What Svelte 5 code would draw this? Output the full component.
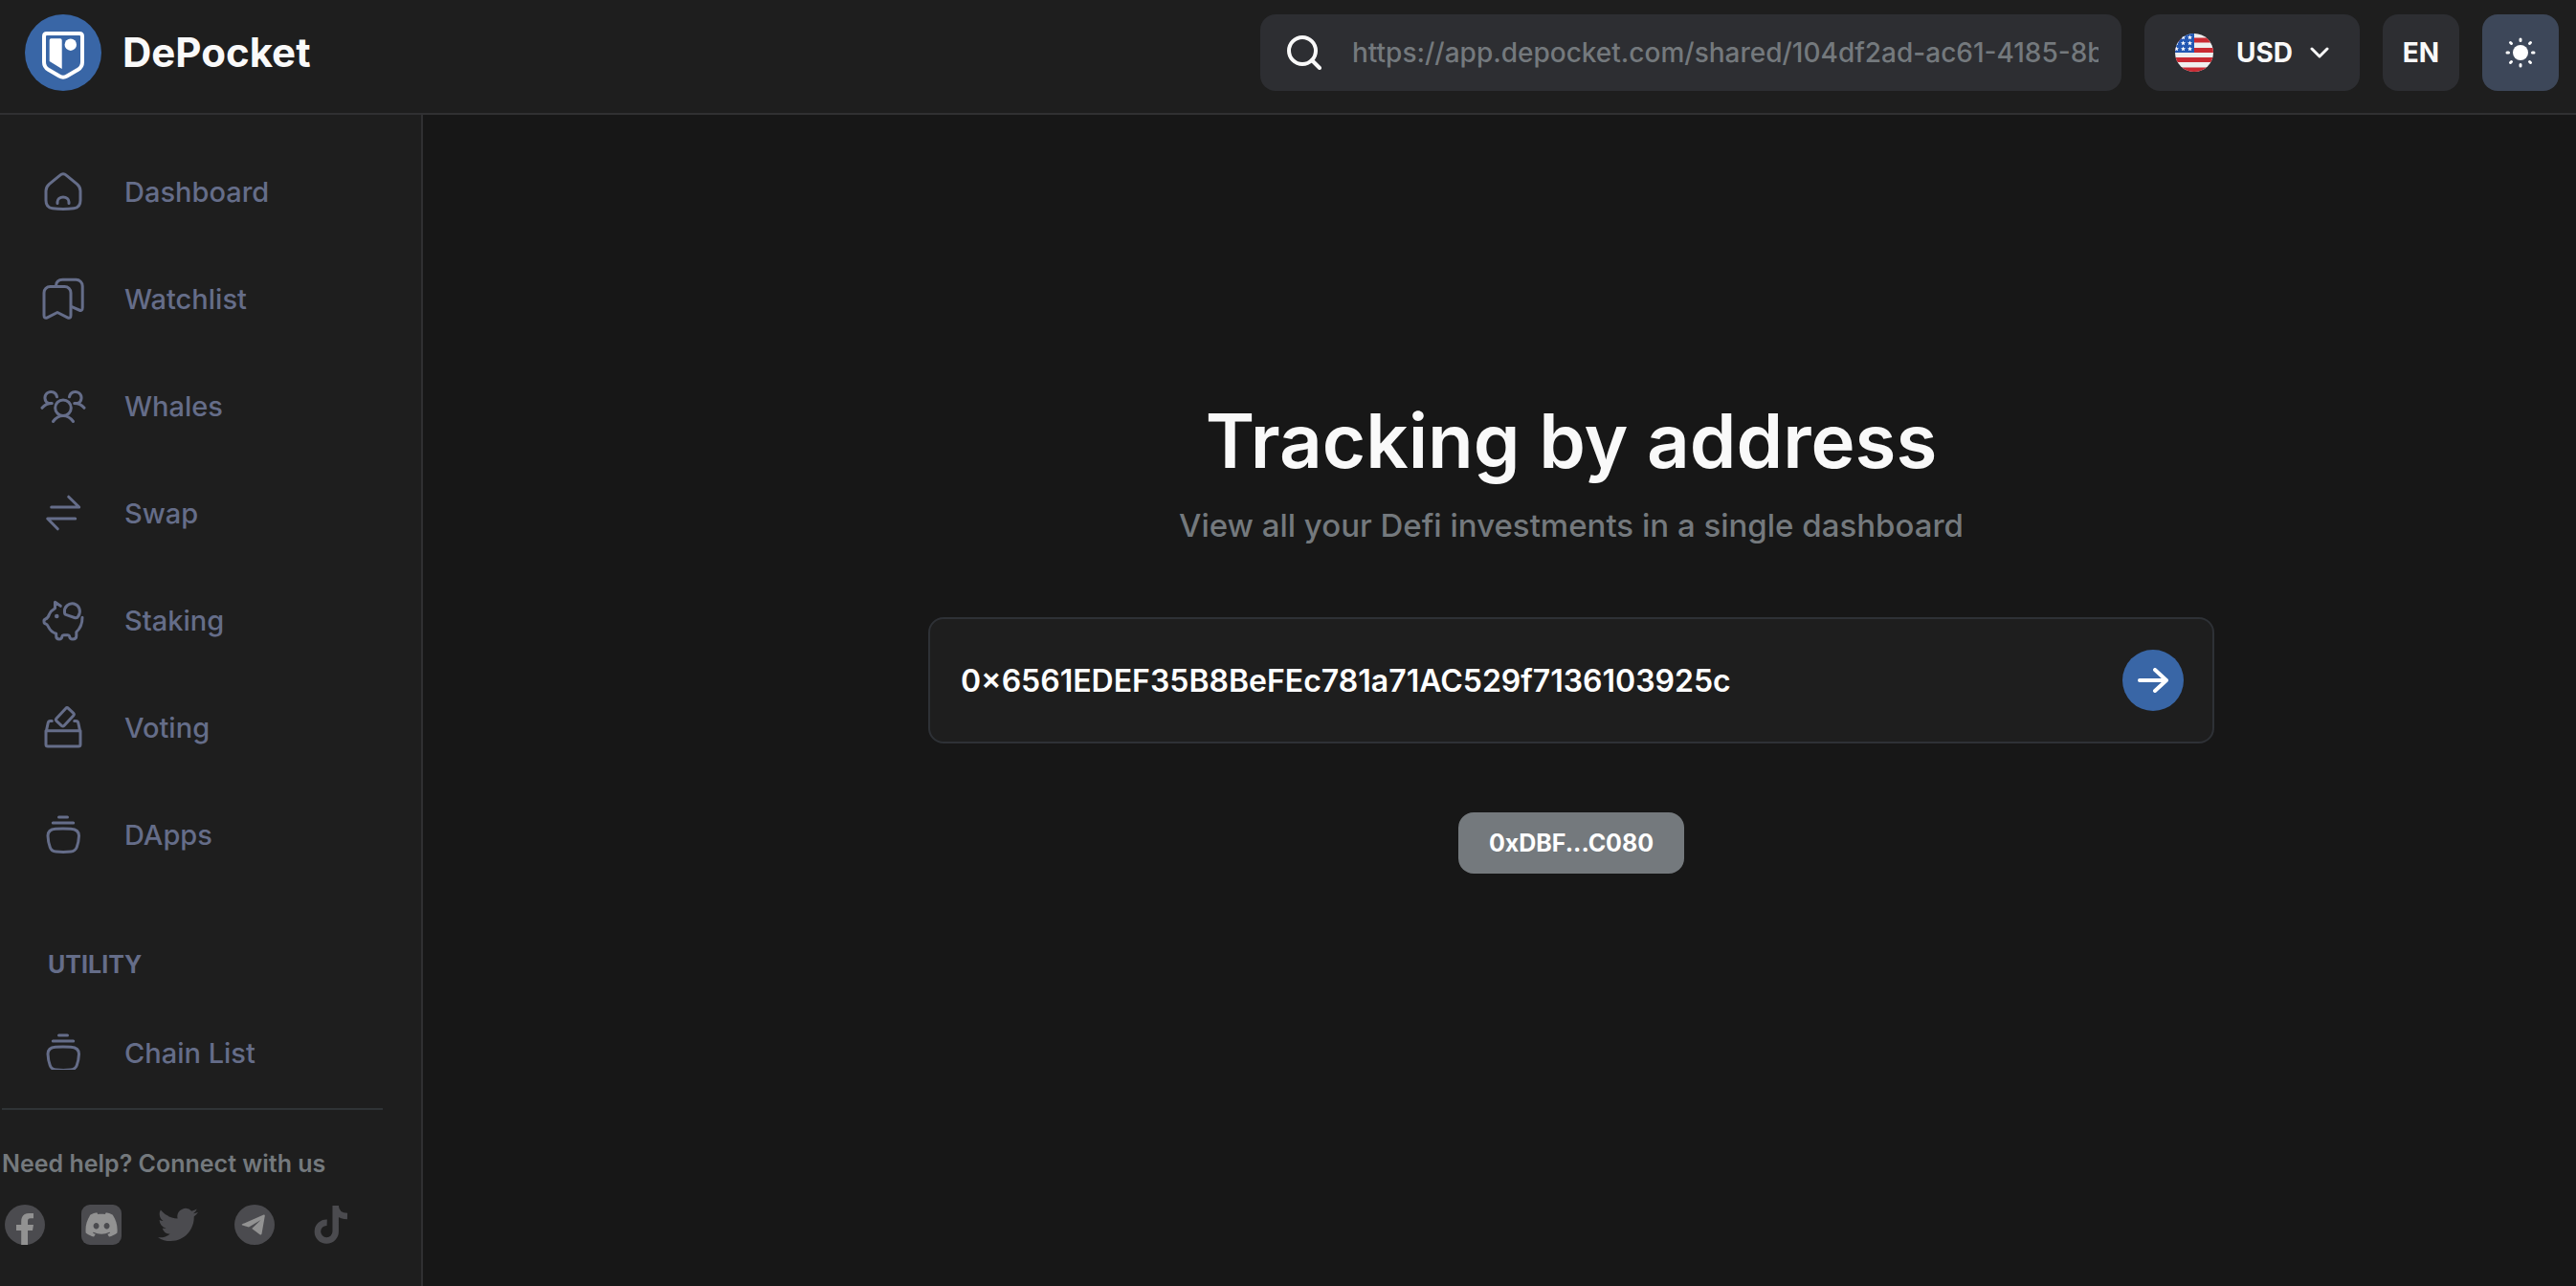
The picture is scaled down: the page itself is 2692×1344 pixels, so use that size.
<script>
  const items = [
    { label: 'Dashboard', icon: 'home' },
    { label: 'Watchlist', icon: 'bookmarks' },
    { label: 'Whales', icon: 'people' },
    { label: 'Swap', icon: 'swap' },
    { label: 'Staking', icon: 'pig' },
    { label: 'Voting', icon: 'vote' },
    { label: 'DApps', icon: 'bowl' }
  ];
  let address = $state('0×6561EDEF35B8BeFEc781a71AC529f7136103925c');
</script>

{#snippet glyph(name)}
  <svg class="glyph" viewBox="0 0 48 48" aria-hidden="true">
    {#if name === 'home'}
      <path d="M20.5 7.3 9.5 16.3Q6 19.3 6 23.5v10Q6 41 13 41.8q11 1.4 22 0 7-.8 7-8.3v-10q0-4.200-3.500-7.200L27.500 7.300q-3.500-3-7 0z" />
      <path d="M18 36.500v-1.500a6 5 0 0 1 12 0v1.500" />
    {:else if name === 'bookmarks'}
      <path d="M4 18a6.500 6.500 0 0 1 6.500-6.500h15a6.500 6.500 0 0 1 6.500 6.500v23.500q0 4-3.500 2.300L18 38.500 7.500 43.800Q4 45.500 4 41.500z" />
      <path d="M16.500 10.500q.5-6.200 7-6.200h14a6.700 6.700 0 0 1 6.700 6.700v22.500q0 4-3.500 2.500L33 32.700" />
    {:else if name === 'people'}
      <circle cx="24" cy="26.300" r="8.300" />
      <path d="M13.500 40.500Q18 34.500 24 34.500T34.500 40.500" />
      <path d="M17.500 14.800A6.300 6.300 0 1 0 8.500 21.400h3.800C8 21.400 5 22.500 2 26.300" />
      <path d="M30.500 14.800A6.300 6.300 0 1 1 39.500 21.400h-3.800C40 21.400 43 22.500 46 26.300" />
    {:else if name === 'swap'}
      <path d="M11.700 18h29L29.700 7.200M36.700 30h-29L18.300 40.800" />
    {:else if name === 'pig'}
      <path d="M21.300 9.300 15.500 5.300v6.500Q11 14.500 9.500 18 8.300 22 5.500 23q-1.800.6-1.500 2.800 0 1.900 1.800 2.200 1.500.3 2.700 3 2.500 5.500 8.200 7.200v2.500q0 3.300 3.200 3.300 2.800 0 3-3 .2-1.300 1.600-1.300h4.500q1.400 0 1.600 1.300.2 3 3.400 3 3.800 0 3.800-3.300V36.500Q44 31 44 21.300" />
      <path d="M25.500 16.200A8 8.300 0 1 1 39.800 20q-1.300 2.500-4 1.500l-8.300-2.800q-2-.7-2-2.500z" />
      <circle class="solid" cx="17.300" cy="20" r="2.300" />
    {:else if name === 'vote'}
      <path d="M6 27.700h36v14.300q0 2-2 2H8q-2 0-2-2zM6.500 27.500 8.200 19.500q.5-2 2.500-2h1.600M41.500 27.500 39.800 19.500q-.5-2-2.500-2h-1.600" />
      <rect x="-5" y="-9" width="11" height="18" rx="2" transform="translate(25.500 13) rotate(43)" />
    {:else}
      <path d="M19.500 6h9M13.300 12h21.400M8 25.500q0-6.800 8-7.300 8-.6 16 0 8.500.5 8.500 7.300-.3 7-2.300 12Q36.500 41.600 32 42q-8 .8-15.500 0-4.800-.4-6.200-4.500-2-5-2.300-12z" />
    {/if}
  </svg>
{/snippet}

<div class="app">
  <header>
    <a class="brand" href="#home">
      <svg class="logo" viewBox="0 0 80 80" aria-hidden="true">
        <circle cx="40" cy="40" r="40" fill="#3966a6" />
        <path d="M23 20h34q3 0 3 3v27q0 5-4.500 7.800L44 64.500q-4 2.300-8 0L24.500 57.800Q20 55 20 50V23q0-3 3-3z" fill="none" stroke="#fff" stroke-width="4" />
        <path d="M27.300 25.300h9.700q1.700 0 1.700 1.700v30L25.700 49V27q0-1.700 1.600-1.700z" fill="#fff" />
        <circle cx="47.800" cy="31.700" r="6.200" fill="#fff" />
      </svg>
      <span>DePocket</span>
    </a>
    <div class="tools">
      <label class="search">
        <svg viewBox="0 0 36 36" aria-hidden="true">
          <circle cx="16" cy="16" r="14" /><path d="m26 26 8 8" />
        </svg>
        <input type="text" aria-label="Search" placeholder="https://app.depocket.com/shared/104df2ad-ac61-4185-8b5e" />
      </label>
      <button class="tool currency" type="button">
        <svg class="flag" viewBox="0 0 40 40" aria-hidden="true">
          <defs><clipPath id="round"><circle cx="20" cy="20" r="20" /></clipPath></defs>
          <g clip-path="url(#round)">
            <path fill="#efefef" d="M0 0h40v40H0z" />
            <path fill="#c92a33" d="M0 4.500h40v5H0zM0 15h40v5H0zM0 25h40v5H0zM0 35.500h40V40H0z" />
            <path fill="#2458b3" d="M0 0h20v20H0z" />
            {#each [4, 10, 16] as y}
              {#each [1.5, 8.5, 15.5] as x}
                <path fill="#fff" transform="translate({x} {y})" d="M0-2.500.7-.8 2.500-.7 1.100.4 1.600 2.200 0 1.200-1.600 2.200-1.100.4-2.500-.7-.7-.8z" />
              {/each}
            {/each}
          </g>
        </svg>
        <span>USD</span>
        <svg class="chevron" viewBox="0 0 20 12" aria-hidden="true"><path d="m2 2 8 8 8-8" /></svg>
      </button>
      <button class="tool square" type="button">EN</button>
      <button class="tool square theme" type="button" aria-label="Toggle theme">
        <svg viewBox="0 0 32 32" aria-hidden="true">
          <circle cx="16" cy="16" r="8" />
          <path d="M16 2v1.500M16 28.500V30M2 16h1.500M28.500 16H30M5.500 5.500l1 1M25.500 25.500l1 1M26.500 5.500l-1 1M6.500 25.500l-1 1" />
        </svg>
      </button>
    </div>
  </header>

  <div class="body">
    <aside>
      <nav>
        {#each items as item}
          <a href="#{item.icon}">{@render glyph(item.icon)}<span>{item.label}</span></a>
        {/each}
        <h2>UTILITY</h2>
        <a class="chain" href="#chains">{@render glyph('bowl')}<span>Chain List</span></a>
      </nav>
      <footer>
        <p>Need help? Connect with us</p>
        <div class="social">
          <a href="#facebook" aria-label="Facebook">
            <svg viewBox="0 0 42 42"><circle cx="21" cy="21" r="21" fill="#4b4b4f" /><path fill="#929292" d="M17.200 42V27H12v-6h5.200v-3.500c0-5.500 3-8.500 8-8.500H30v5.300h-3c-2.300 0-3 1-3 3V21h6l-1 6h-5v15z" /></svg>
          </a>
          <a href="#discord" aria-label="Discord">
            <svg viewBox="0 0 42 42"><rect width="42" height="42" rx="9" fill="#4b4b4f" /><path fill="#929292" transform="translate(4.500 4.400) scale(1.380)" d="M20.317 4.370a19.791 19.791 0 00-4.885-1.515.074.074 0 00-.079.037c-.211.375-.445.865-.608 1.250-1.845-.276-3.680-.276-5.487 0-.164-.393-.406-.874-.618-1.250a.077.077 0 00-.079-.037 19.736 19.736 0 00-4.885 1.515.07.07 0 00-.032.028C.533 9.046-.319 13.580.099 18.058a.082.082 0 00.031.056c2.053 1.508 4.041 2.423 5.993 3.029a.078.078 0 00.084-.028c.462-.630.873-1.295 1.226-1.994a.076.076 0 00-.042-.106c-.653-.248-1.274-.550-1.872-.892a.077.077 0 01-.008-.128c.126-.094.252-.192.372-.291a.074.074 0 01.078-.011c3.928 1.793 8.180 1.793 12.061 0a.074.074 0 01.079.010c.120.099.246.198.373.292a.077.077 0 01-.007.128 12.299 12.299 0 01-1.873.891.077.077 0 00-.041.107c.360.698.772 1.363 1.225 1.993a.076.076 0 00.084.029c1.961-.607 3.950-1.522 6.002-3.029a.077.077 0 00.031-.055c.500-5.177-.838-9.674-3.549-13.660a.061.061 0 00-.031-.029zM8.020 15.331c-1.183 0-2.157-1.086-2.157-2.419 0-1.333.956-2.419 2.157-2.419 1.211 0 2.176 1.095 2.157 2.419 0 1.333-.956 2.419-2.157 2.419zm7.975 0c-1.183 0-2.157-1.086-2.157-2.419 0-1.333.955-2.419 2.157-2.419 1.211 0 2.176 1.095 2.157 2.419 0 1.333-.946 2.419-2.157 2.419z" /></svg>
          </a>
          <a href="#twitter" aria-label="Twitter">
            <svg viewBox="0 0 24 24"><path fill="#4b4b4f" d="M23.953 4.570a10 10 0 01-2.825.775 4.958 4.958 0 002.163-2.723c-.951.555-2.005.959-3.127 1.184a4.920 4.920 0 00-8.384 4.482C7.690 8.095 4.067 6.130 1.640 3.162a4.822 4.822 0 00-.666 2.475c0 1.710.870 3.213 2.188 4.096a4.904 4.904 0 01-2.228-.616v.060a4.923 4.923 0 003.946 4.827 4.996 4.996 0 01-2.212.085 4.936 4.936 0 004.604 3.417 9.867 9.867 0 01-6.102 2.105c-.390 0-.779-.023-1.170-.067a13.995 13.995 0 007.557 2.209c9.053 0 13.998-7.496 13.998-13.985 0-.210 0-.420-.015-.630A9.935 9.935 0 0024 4.590z" /></svg>
          </a>
          <a href="#telegram" aria-label="Telegram">
            <svg viewBox="0 0 42 42"><circle cx="21" cy="21" r="21" fill="#4b4b4f" /><path fill="#929292" d="M8.200 20.300 30.600 10.500q1.400-.3 1.200 1.300L28.500 30.500q-.4 1.600-1.900.8l-8.400-6.200 9.300-9L15 23.500 8.300 21.600q-1.100-.6-.1-1.300z" /></svg>
          </a>
          <a href="#tiktok" aria-label="TikTok">
            <svg viewBox="3 3 42 42"><path fill="none" stroke="#4b4b4f" stroke-width="6.500" d="M19.700 21.700A9.400 9.400 0 1 0 28.700 31V4C28.700 10.500 33 14.800 41 15" /></svg>
          </a>
        </div>
      </footer>
    </aside>

    <main>
      <h1>Tracking by address</h1>
      <p class="lead">View all your Defi investments in a single dashboard</p>
      <form class="address" onsubmit={(e) => e.preventDefault()}>
        <input type="text" aria-label="Wallet address" bind:value={address} spellcheck="false" />
        <button type="submit" aria-label="Track address">
          <svg viewBox="0 0 32 26" aria-hidden="true"><path d="M2 13h28M18 2l12 11L18 24" /></svg>
        </button>
      </form>
      <button class="chip" type="button">0xDBF...C080</button>
    </main>
  </div>
</div>

<style>
  :global(body) { background: #171717; }
  .app, .app * { box-sizing: border-box; }
  .app {
    min-height: 100vh;
    display: flex;
    flex-direction: column;
    font-family: Inter, "Liberation Sans", sans-serif;
    font-size: 28px;
    color: #f9f9f9;
  }
  a { color: inherit; text-decoration: none; }
  button, input { font: inherit; color: inherit; border: 0; padding: 0; background: none; outline: 0; }
  svg { display: block; flex: none; }

  header {
    display: flex;
    justify-content: space-between;
    align-items: flex-start;
    height: 120px;
    padding: 15px 18px 0 26px;
    background: #1e1e1e;
    border-bottom: 2px solid #303032;
  }
  .brand { display: flex; align-items: center; gap: 22px; font-size: 42px; font-weight: 700; line-height: 80px; }
  .logo { width: 80px; height: 80px; }
  .tools { display: flex; gap: 24px; }
  .search {
    display: flex;
    align-items: center;
    gap: 32px;
    width: 900px;
    height: 80px;
    padding: 0 24px 0 28px;
    border-radius: 16px;
    background: #2d2e32;
  }
  .search svg { width: 36px; height: 36px; fill: none; stroke: #f9f9f9; stroke-width: 4; stroke-linecap: round; }
  .search input { flex: 1; min-width: 0; font-weight: 500; }
  .search input::placeholder { color: #74797d; opacity: 1; }
  .tool {
    display: flex;
    align-items: center;
    justify-content: center;
    height: 80px;
    border-radius: 16px;
    background: #2d2e32;
    font-weight: 700;
  }
  .currency { width: 225px; }
  .flag { width: 40px; height: 40px; margin-right: 24px; }
  .chevron { width: 20px; height: 12px; margin-left: 18px; fill: none; stroke: #f9f9f9; stroke-width: 3; stroke-linecap: round; stroke-linejoin: round; }
  .square { width: 80px; }
  .theme { background: #3d4759; }
  .theme svg { width: 32px; height: 32px; fill: #fff; stroke: #fff; stroke-width: 3; stroke-linecap: round; }
  .theme circle { stroke: none; }

  .body { flex: 1; display: flex; min-height: 0; }
  aside {
    display: flex;
    flex-direction: column;
    flex: none;
    width: 442px;
    height: calc(100vh - 120px);
    background: #1e1e1e;
    border-right: 2px solid #303032;
  }
  nav { flex: 1; min-height: 0; overflow: hidden; padding-top: 24px; color: #656d89; font-size: 29px; font-weight: 500; }
  nav a { display: flex; align-items: center; gap: 40px; height: 112px; padding-left: 42px; }
  nav h2 { margin: 63px 0 0 50px; font-size: 25px; line-height: 34px; font-weight: 700; }
  nav .chain { margin-top: 19px; }
  .glyph { width: 48px; height: 48px; fill: none; stroke: currentColor; stroke-width: 3; stroke-linecap: round; stroke-linejoin: round; }
  .solid { fill: currentColor; stroke: none; }

  footer { height: 226px; padding-left: 2px; }
  footer::before { content: ""; display: block; width: 398px; height: 2px; margin-top: 40px; background: #2f3336; }
  footer p { margin: 36px 0 0; font-size: 25px; line-height: 40px; font-weight: 600; color: #74797d; }
  .social { display: flex; gap: 38px; padding: 23px 0 0 3px; }
  .social svg { width: 42px; height: 42px; }

  main { flex: 1; display: flex; flex-direction: column; align-items: center; padding: 291px 0 0 150px; }
  h1 { margin: 0; font-size: 78px; line-height: 100px; font-weight: 600; }
  .lead { margin: 18px 0 0; font-size: 33px; line-height: 40px; font-weight: 500; color: #74797d; }
  .address {
    display: flex;
    align-items: center;
    width: 100%;
    max-width: 1344px;
    height: 132px;
    margin-top: 76px;
    padding: 0 30px 0 32px;
    border: 2px solid #2e3136;
    border-radius: 16px;
    background: #1e1e1e;
  }
  .address input { flex: 1; min-width: 0; font-size: 32px; font-weight: 600; color: #fff; }
  .address button { display: flex; align-items: center; justify-content: center; width: 64px; height: 64px; border-radius: 32px; background: #3966a6; }
  .address svg { width: 32px; height: 26px; fill: none; stroke: #fff; stroke-width: 4; stroke-linecap: round; stroke-linejoin: round; }
  .chip { height: 64px; margin-top: 72px; padding: 0 32px; border-radius: 16px; background: #74797d; font-size: 25px; font-weight: 700; color: #fff; }
</style>
